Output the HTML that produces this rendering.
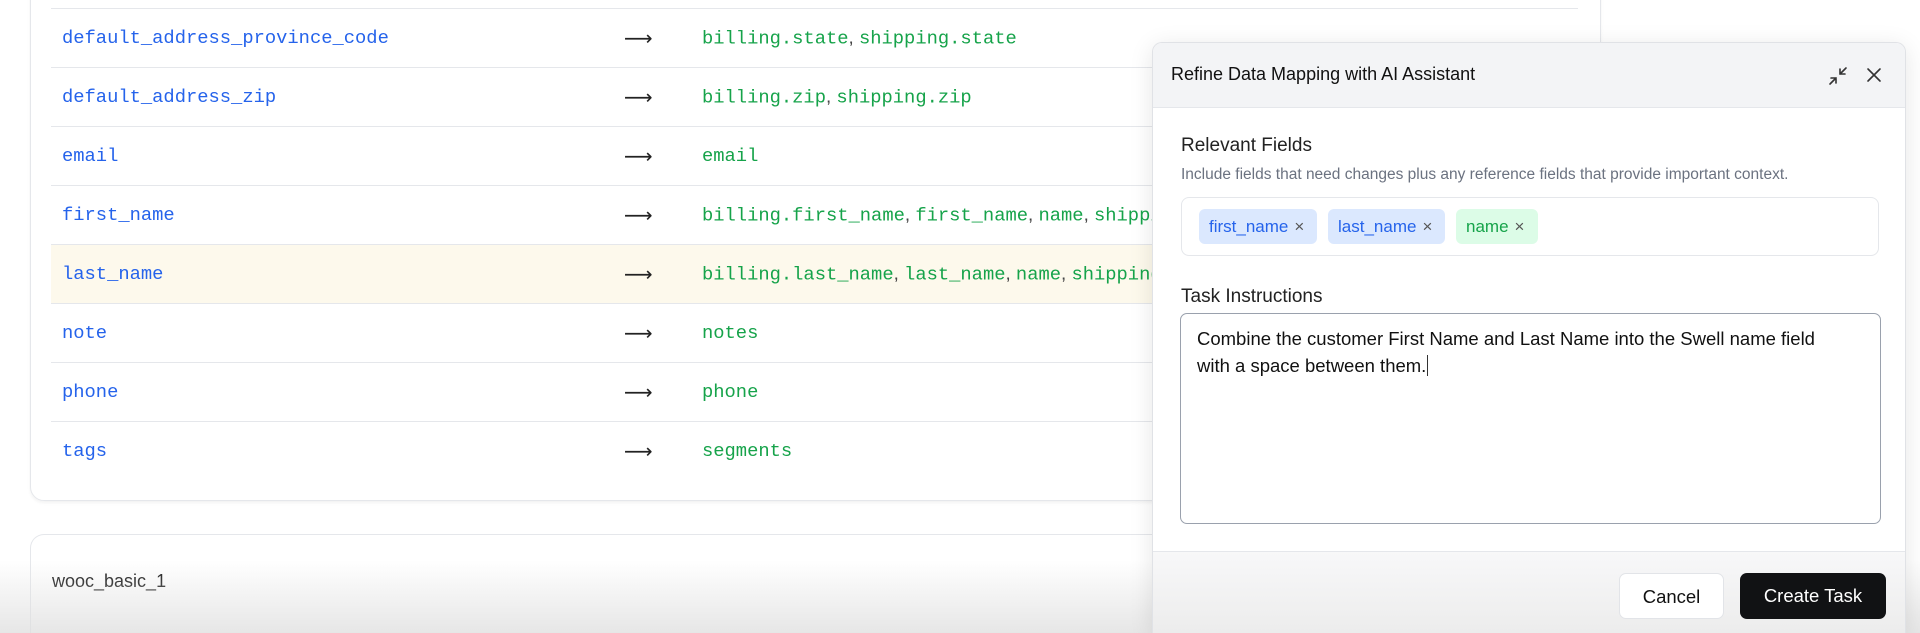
<!DOCTYPE html>
<html style="width:1920px;height:633px;overflow:hidden"><head><meta charset="utf-8"><style>
*{box-sizing:border-box;margin:0;padding:0}
body{width:1920px;height:633px;overflow:hidden;background:#fff;position:relative;font-family:"Liberation Sans",sans-serif}
.card{position:absolute;left:30px;top:-20px;width:1571px;height:521px;border:1px solid #e5e7eb;border-radius:14px;box-shadow:0 2px 3px rgba(0,0,0,.05)}
.row{position:absolute;left:51px;width:1527px;height:59px;border-top:1.5px solid #e5e7eb;font-family:"Liberation Mono",monospace;font-size:18.8px}
.row span{position:absolute;top:50%;transform:translateY(-50%);white-space:nowrap}
.k{left:11px;color:#2563eb}.a{left:573px;color:#222;font-family:"DejaVu Sans",sans-serif;font-size:20px}.v{left:651px;color:#16a34a}
.v i{font-style:normal;color:#444;font-family:"Liberation Sans",sans-serif}
.card2{position:absolute;left:30px;top:534px;width:1571px;height:99px;border:1px solid #e5e7eb;border-bottom:none;border-radius:14px 14px 0 0}
.fade{position:absolute;left:0;top:560px;width:1920px;height:73px;background:linear-gradient(rgba(235,235,235,0),rgba(222,222,222,.75))}
.panel{position:absolute;left:1152px;top:42px;width:754px;height:591px;background:#fff;border:1px solid #e0e2e6;border-bottom:none;border-radius:10px 10px 0 0;box-shadow:0 4px 24px rgba(0,0,0,.1);overflow:hidden;z-index:6}
.hd{height:65px;background:#f3f4f6;border-bottom:1px solid #e5e7eb;position:relative}
.hd .t{position:absolute;left:18px;top:21px;font-size:18px;font-weight:500;color:#111}
.lbl{position:absolute;left:28px;font-size:19px;color:#222}
.sub{position:absolute;left:28px;top:123px;font-size:15.5px;color:#6b7280}
.box{position:absolute;left:28px;top:154px;width:698px;height:59px;border:1px solid #e5e7eb;border-radius:8px}
.tag{position:absolute;top:11px;height:35px;border-radius:6px;font-size:17px;line-height:35px;padding-left:10px}
.tag b{font-weight:normal;color:#555;margin-left:6px}
.ta{position:absolute;left:27px;top:270px;width:701px;height:211px;border:1.5px solid #9aa1ad;border-radius:7px;padding:11px 34px 11px 16px;font-size:18.5px;line-height:27px;color:#111}
.ft{position:absolute;left:0;top:508px;width:100%;height:83px;background:linear-gradient(#f8f8f9,#ececec)}
.ft:before{content:"";position:absolute;left:0;top:0;width:100%;border-top:1px solid #e5e7eb}
.btn{position:absolute;top:22px;height:46px;border-radius:7px;font-size:18.5px;line-height:46px;text-align:center}
</style></head><body>
<div class="card"></div>
<div class="row" style="top:8px"><span class="k">default_address_province_code</span><span class="a">⟶</span><span class="v">billing.state<i>, </i>shipping.state</span></div>
<div class="row" style="top:67px"><span class="k">default_address_zip</span><span class="a">⟶</span><span class="v">billing.zip<i>, </i>shipping.zip</span></div>
<div class="row" style="top:126px"><span class="k">email</span><span class="a">⟶</span><span class="v">email</span></div>
<div class="row" style="top:185px"><span class="k">first_name</span><span class="a">⟶</span><span class="v">billing.first_name<i>, </i>first_name<i>, </i>name<i>, </i>shipping.first_name</span></div>
<div class="row" style="top:244px;background:#fdf9ec"><span class="k">last_name</span><span class="a">⟶</span><span class="v">billing.last_name<i>, </i>last_name<i>, </i>name<i>, </i>shipping.last_name</span></div>
<div class="row" style="top:303px"><span class="k">note</span><span class="a">⟶</span><span class="v">notes</span></div>
<div class="row" style="top:362px"><span class="k">phone</span><span class="a">⟶</span><span class="v">phone</span></div>
<div class="row" style="top:421px"><span class="k">tags</span><span class="a">⟶</span><span class="v">segments</span></div>
<div class="card2"><div style="position:absolute;left:21px;top:36px;font-size:18px;color:#111">wooc_basic_1</div></div>
<div class="fade"></div>
<div class="panel">
 <div class="hd"><div class="t">Refine Data Mapping with AI Assistant</div>
  <svg style="position:absolute;left:674px;top:22px" width="22" height="22" viewBox="0 0 22 22" fill="none" stroke="#333" stroke-width="1.6" stroke-linecap="round"><path d="M19 3l-6 6M13 4v5h5M3 19l6-6M4 13h5v5"/></svg>
  <svg style="position:absolute;left:712px;top:23px" width="18" height="18" viewBox="0 0 18 18" fill="none" stroke="#333" stroke-width="1.6" stroke-linecap="round"><path d="M3 3l12 12M15 3L3 15"/></svg>
 </div>
 <div class="lbl" style="top:92px">Relevant Fields</div>
 <div class="sub">Include fields that need changes plus any reference fields that provide important context.</div>
 <div class="box">
  <div class="tag" style="left:17px;width:118px;background:#dbe8fe;color:#2563eb">first_name<b>×</b></div>
  <div class="tag" style="left:146px;width:117px;background:#dbe8fe;color:#2563eb">last_name<b>×</b></div>
  <div class="tag" style="left:274px;width:82px;background:#dcfce7;color:#16a34a">name<b>×</b></div>
 </div>
 <div class="lbl" style="top:243px">Task Instructions</div>
 <div class="ta">Combine the customer First Name and Last Name into the Swell name field with a space between them.<span style="border-left:1.5px solid #333;margin-left:1px"></span></div>
 <div class="ft">
  <div class="btn" style="left:466px;width:105px;background:#fff;border:1px solid #e2e4e8;color:#111">Cancel</div>
  <div class="btn" style="left:587px;width:146px;background:#111214;color:#fff">Create Task</div>
 </div>
</div>
</body></html>
